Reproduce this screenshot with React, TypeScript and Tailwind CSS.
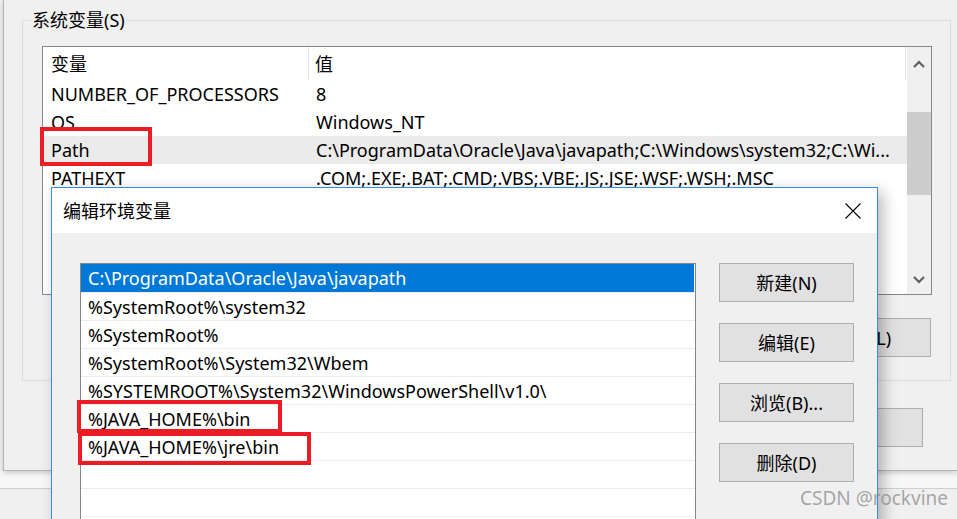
import React from "react";

const sysVars = [
  { name: "NUMBER_OF_PROCESSORS", value: "8" },
  { name: "OS", value: "Windows_NT" },
  { name: "Path", value: "C:\\ProgramData\\Oracle\\Java\\javapath;C:\\Windows\\system32;C:\\Wi...", hover: true },
  { name: "PATHEXT", value: ".COM;.EXE;.BAT;.CMD;.VBS;.VBE;.JS;.JSE;.WSF;.WSH;.MSC" },
  { name: "PROCESSOR_ARCHITECTURE", value: "AMD64" },
  { name: "PROCESSOR_IDENTIFIER", value: "Intel64 Family 6" },
  { name: "PROCESSOR_LEVEL", value: "6" },
];

const pathEntries = [
  "C:\\ProgramData\\Oracle\\Java\\javapath",
  "%SystemRoot%\\system32",
  "%SystemRoot%",
  "%SystemRoot%\\System32\\Wbem",
  "%SYSTEMROOT%\\System32\\WindowsPowerShell\\v1.0\\",
  "%JAVA_HOME%\\bin",
  "%JAVA_HOME%\\jre\\bin",
  "",
  "",
  "",
];

function Chevron({ up }: { up?: boolean }) {
  return (
    <svg width="12" height="8" viewBox="0 0 12 8">
      <path
        d={up ? "M1 7 L6 2 L11 7" : "M1 1 L6 6 L11 1"}
        fill="none"
        stroke="#606060"
        strokeWidth="2.2"
      />
    </svg>
  );
}

function WinButton({ label, className = "" }: { label: string; className?: string }) {
  return (
    <div
      className={`h-[39px] shrink-0 flex items-center justify-center bg-[#e1e1e1] border border-[#adadad] text-[18px] text-black whitespace-nowrap ${className}`}
    >
      {label}
    </div>
  );
}

export default function App() {
  return (
    <div className="relative w-[957px] h-[519px] overflow-hidden bg-[#f0f0f0] font-['Noto_Sans','Noto_Sans_CJK_SC',sans-serif] text-[18px] leading-[24px] text-black">
      {/* window behind, lower */}
      <div className="absolute left-0 top-[471px] w-full h-[18px] bg-[#f7f7f7] border-b border-[#cfcfcf]" />

      {/* 环境变量 window */}
      <div className="absolute left-[3px] top-0 w-[954px] h-[471px] bg-[#f0f0f0] border-l border-b border-[#b4b4b4] shadow-[0_2px_5px_rgba(0,0,0,0.18)] flex flex-col">
        <div className="relative ml-[18px] mt-[20px] w-[929px] h-[361px] shrink-0 border border-[#dcdcdc] flex flex-col">
          <span className="absolute left-[8px] -top-[12px] px-[1px] bg-[#f0f0f0] text-[18px] leading-[22px]">
            系统变量(S)
          </span>

          <div className="ml-[19px] mt-[25px] w-[890px] h-[249px] shrink-0 border border-[#828790] bg-white flex">
            <div className="flex-1 overflow-hidden">
              <div className="h-[33px] flex items-center">
                <div className="w-[266px] h-full pl-[8px] flex items-center border-r border-[#e5e5e5]">
                  变量
                </div>
                <div className="flex-1 h-full pl-[6px] flex items-center border-r border-[#e5e5e5] mr-[1px]">
                  值
                </div>
              </div>
              {sysVars.map((v) => (
                <div
                  key={v.name}
                  className={`h-[28px] flex items-center whitespace-nowrap ${v.hover ? "bg-[#ebebeb]" : ""}`}
                >
                  <div className="w-[266px] pl-[8px]">{v.name}</div>
                  <div className="flex-1 pl-[7px] overflow-hidden">{v.value}</div>
                </div>
              ))}
            </div>
            <div className="w-[24px] bg-[#f0f0f0] flex flex-col items-center">
              <div className="h-[33px] flex items-center justify-center">
                <Chevron up />
              </div>
              <div className="w-full h-[83px] mt-[32px] bg-[#cdcdcd]" />
              <div className="flex-1" />
              <div className="h-[28px] flex items-center justify-center">
                <Chevron />
              </div>
            </div>
          </div>

          <div className="mt-[23px] pr-[19px] flex justify-end gap-[12px]">
            <WinButton label="编辑(I)..." className="w-[136px]" />
            <WinButton label="删除(L)" className="w-[136px]" />
          </div>
        </div>

        <div className="mt-[27px] pr-[34px] flex justify-end gap-[12px]">
          <WinButton label="确定" className="w-[140px]" />
          <WinButton label="取消" className="w-[140px]" />
        </div>
      </div>

      {/* 编辑环境变量 dialog */}
      <div className="absolute left-[51px] top-[187px] w-[827px] h-[345px] overflow-hidden bg-[#f0f0f0] border border-[#3c8bdb] shadow-[5px_5px_14px_rgba(0,0,0,0.28)] flex flex-col">
        <div className="h-[45px] shrink-0 bg-white flex items-center justify-between pl-[11px] pr-[16px]">
          <span>编辑环境变量</span>
          <svg width="16" height="16" viewBox="0 0 16 16">
            <path d="M0.5 0.5 L15.5 15.5 M15.5 0.5 L0.5 15.5" stroke="#000" strokeWidth="1.1" />
          </svg>
        </div>
        <div className="flex pl-[28px] pt-[30px] gap-[23px]">
          <div className="w-[616px] h-[290px] shrink-0 overflow-hidden border border-[#828790] bg-white flex flex-col">
            {pathEntries.map((p, i) => (
              <div
                key={i}
                className={`h-[28px] shrink-0 flex items-center pl-[7px] whitespace-nowrap ${
                  i === 0 ? "bg-[#0078d7] text-white mr-[1px]" : "border-t border-[#eaeaea]"
                }`}
              >
                {p}
              </div>
            ))}
          </div>
          <div className="flex flex-col gap-[21px]">
            <WinButton label="新建(N)" className="w-[135px]" />
            <WinButton label="编辑(E)" className="w-[135px]" />
            <WinButton label="浏览(B)..." className="w-[135px]" />
            <WinButton label="删除(D)" className="w-[135px]" />
          </div>
        </div>
      </div>

      {/* red highlight boxes */}
      <div className="absolute left-[40px] top-[127px] w-[112px] h-[39px] border-[4px] border-[#ec1c24]" />
      <div className="absolute left-[77px] top-[400px] w-[205px] h-[33px] border-[4px] border-[#ec1c24]" />
      <div className="absolute left-[78px] top-[432px] w-[233px] h-[33px] border-[4px] border-[#ec1c24]" />

      {/* watermark */}
      <span className="absolute right-[9px] top-[486px] text-[19px] text-[#8c8c8c]/75">CSDN @rockvine</span>
    </div>
  );
}
